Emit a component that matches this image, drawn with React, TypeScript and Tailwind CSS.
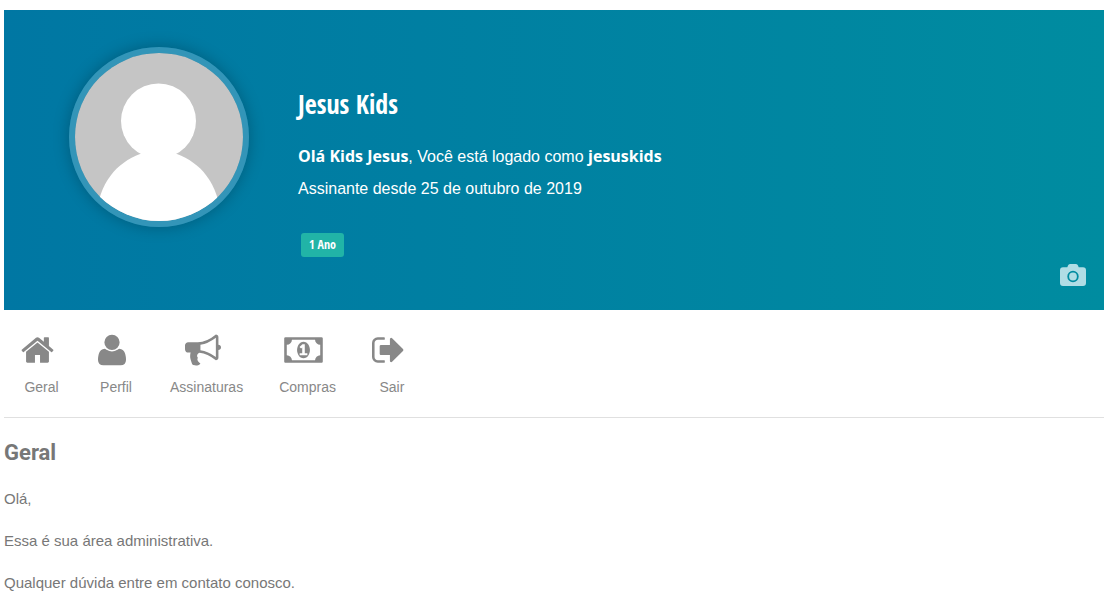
import type { ReactNode } from 'react'

type NavItem = {
  label: string
  icon: ReactNode
}

const navItems: NavItem[] = [
  {
    label: 'Geral',
    icon: (
      <svg viewBox="64 0 1664 1792" fill="currentColor" className="mr-2 h-9 w-[33px]" aria-hidden="true">
        <path d="M1472 992v480q0 26-19 45t-45 19h-384v-384h-256v384h-384q-26 0-45-19t-19-45v-480q0-1 .5-3t.5-3l575-474 575 474q1 2 1 6zm223-69l-62 74q-8 9-21 11h-3q-13 0-21-7l-692-577-692 577q-12 8-24 7-13-2-21-11l-62-74q-8-10-7-23.5t11-21.5l719-599q32-26 76-26t76 26l244 204v-195q0-14 9-23t23-9h192q14 0 23 9t9 23v408l219 182q10 8 11 21.5t-7 23.5z" />
      </svg>
    ),
  },
  {
    label: 'Perfil',
    icon: (
      <svg viewBox="0 0 1408 1792" fill="currentColor" className="mr-2 h-9 w-[28px]" aria-hidden="true">
        <path
          transform="translate(0 1536) scale(1 -1)"
          d="M1408 131q0 -120 -73 -189.5t-194 -69.5h-874q-121 0 -194 69.5t-73 189.5q0 53 3.5 103.5t14 109t26.5 108.5t43 97.5t62 81t85.5 53.5t111.5 20q9 0 42 -21.5t74.5 -48t108 -48t133.5 -21.5t133.5 21.5t108 48t74.5 48t42 21.5q61 0 111.5 -20t85.5 -53.5t62 -81t43 -97.5t26.5 -108.5t14 -109t3.5 -103.5zM1088 1024q0 -159 -112.5 -271.5t-271.5 -112.5t-271.5 112.5t-112.5 271.5t112.5 271.5t271.5 112.5t271.5 -112.5t112.5 -271.5z"
        />
      </svg>
    ),
  },
  {
    label: 'Assinaturas',
    icon: (
      <svg viewBox="0 0 1792 1792" fill="currentColor" className="mr-2 size-9" aria-hidden="true">
        <path d="M1664 640q53 0 90.5 37.5t37.5 90.5-37.5 90.5-90.5 37.5v384q0 52-38 90t-90 38q-417-347-812-380-58 19-91 66t-31 100.5 40 92.5q-20 33-23 65.5t6 58 33.5 55 48 50 61.5 50.5q-29 58-111.5 83t-168.5 11.5-132-55.5q-7-23-29.5-87.5t-32-94.5-23-89-15-101 3.5-98.5 22-110.5h-122q-66 0-113-47t-47-113v-192q0-66 47-113t113-47h480q435 0 896-384 52 0 90 38t38 90v384zm-128 604v-954q-394 302-768 343v270q377 42 768 341z" />
      </svg>
    ),
  },
  {
    label: 'Compras',
    icon: (
      <svg viewBox="0 0 1920 1792" fill="currentColor" className="mr-2 h-9 w-[39px]" aria-hidden="true">
        <path d="M768 1152h384v-96h-128v-448h-114l-148 137 77 80q42-37 55-57h2v288h-128v96zm512-256q0 70-21 142t-59.5 134-101.5 101-138 39-138-39-101.5-101-59.5-134-21-142 21-142 59.5-134 101.5-101 138-39 138 39 101.5 101 59.5 134 21 142zm512 256v-512q-106 0-181-75t-75-181h-1152q0 106-75 181t-181 75v512q106 0 181 75t75 181h1152q0-106 75-181t181-75zm128-832v1152q0 26-19 45t-45 19h-1792q-26 0-45-19t-19-45v-1152q0-26 19-45t45-19h1792q26 0 45 19t19 45z" />
      </svg>
    ),
  },
  {
    label: 'Sair',
    icon: (
      <svg viewBox="64 0 1600 1792" fill="currentColor" className="mr-2 h-9 w-[32px]" aria-hidden="true">
        <path d="M704 1440q0 4 1 20t.5 26.5-3 23.5-10 19.5-20.5 6.5h-320q-119 0-203.5-84.5t-84.5-203.5v-704q0-119 84.5-203.5t203.5-84.5h320q13 0 22.5 9.5t9.5 22.5q0 4 1 20t.5 26.5-3 23.5-10 19.5-20.5 6.5h-320q-66 0-113 47t-47 113v704q0 66 47 113t113 47h312l11.5 1 11.5 3 8 5.500 7 9 2 13.500zm928-544q0 26-19 45l-544 544q-19 19-45 19t-45-19-19-45v-288h-448q-26 0-45-19t-19-45v-384q0-26 19-45t45-19h448v-288q0-26 19-45t45-19 45 19l544 544q19 19 19 45z" />
      </svg>
    ),
  },
]

function Avatar() {
  return (
    <div className="size-[180px] shrink-0 rounded-full border-6 border-[#3395b8] shadow-[0_0_16px_rgba(0,0,0,0.25)]">
      <svg viewBox="0 0 168 168" className="size-full rounded-full bg-[#c5c5c5]" fill="#fff" aria-hidden="true">
        <circle cx="83.500" cy="68" r="37.500" />
        <path d="M20 168C24 128 42 110 65 101H102C125 110 143 128 147 168Z" />
      </svg>
    </div>
  )
}

function ProfileHeader() {
  return (
    <header className="relative flex min-h-[300px] bg-linear-to-r from-[#0077a3] to-[#008ca0] pt-[37px] pl-[65px] text-white">
      <Avatar />
      <div className="ml-[49px] pt-10">
        <h1 className="font-['Open_Sans_Condensed','Roboto_Condensed',sans-serif] text-[26px] leading-[34px] font-bold">
          Jesus Kids
        </h1>
        <div className="mt-[19px] text-base leading-8">
          <p>
            <strong className="font-['Open_Sans',sans-serif] font-bold">Olá Kids Jesus</strong>, Você está logado como{' '}
            <strong className="font-['Open_Sans',sans-serif] font-bold">jesuskids</strong>
          </p>
          <p>Assinante desde 25 de outubro de 2019</p>
        </div>
        <span className="mt-7 ml-[3px] inline-block rounded-[3px] bg-[#21b4a7] px-2 font-['Open_Sans_Condensed','Roboto_Condensed',sans-serif] text-xs leading-6 font-semibold">
          1 Ano
        </span>
      </div>
      <button type="button" aria-label="Alterar capa" className="absolute right-[18px] bottom-6 text-[#b0dde5]">
        <svg viewBox="0 0 26 22" className="h-[22px] w-[26px]" fill="currentColor" fillRule="evenodd">
          <path d="M10 0h6q1.500 0 2 1.500l.7 1.700H23q3 0 3 3V19q0 3-3 3H3q-3 0-3-3V6.200q0-3 3-3h4.300L8 1.500Q8.500 0 10 0zM13 6.800a5.700 5.700 0 1 0 0 11.400a5.700 5.700 0 0 0 0-11.400zm0 1.800a3.900 3.900 0 1 1 0 7.800a3.900 3.900 0 0 1 0-7.800z" />
        </svg>
      </button>
    </header>
  )
}

function AccountNav() {
  return (
    <nav className="border-b border-[#e0e0e0] px-[17px] pt-[22px] pb-4">
      <ul className="flex gap-9">
        {navItems.map((item) => (
          <li key={item.label}>
            <a href="#" className="flex flex-col items-center text-sm leading-7 text-[#888]">
              {item.icon}
              <span className="mt-[5px]">{item.label}</span>
            </a>
          </li>
        ))}
      </ul>
    </nav>
  )
}

export default function App() {
  return (
    <div className="bg-white pt-2.5 pr-1.5 pb-2 pl-1 font-['Liberation_Sans',Arial,sans-serif]">
      <ProfileHeader />
      <AccountNav />
      <main className="pt-4 text-[15px] leading-[22px] text-[#777]">
        <h2 className="font-['Roboto',sans-serif] text-[22px] leading-[38px] font-bold">Geral</h2>
        <div className="mt-4 space-y-5">
          <p>Olá,</p>
          <p>Essa é sua área administrativa.</p>
          <p>Qualquer dúvida entre em contato conosco.</p>
        </div>
      </main>
    </div>
  )
}
